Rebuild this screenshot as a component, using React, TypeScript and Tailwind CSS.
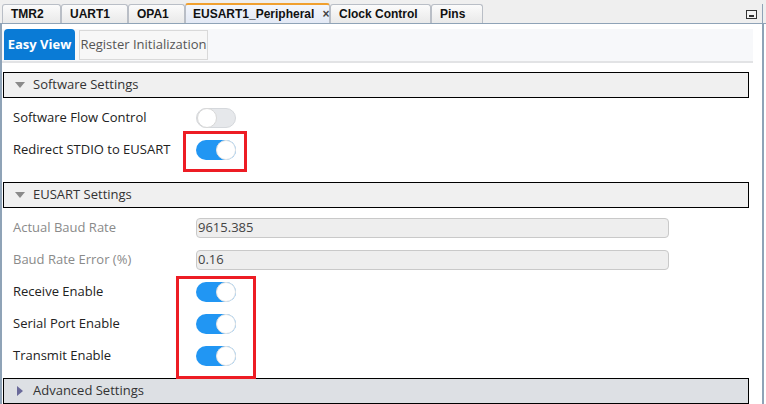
import React from "react";

const Toggle = ({ on }: { on: boolean }) => (
  <div
    className={
      on
        ? "relative w-[40px] h-[20px] rounded-full bg-[#2196f3]"
        : "relative w-[40px] h-[20px] rounded-full bg-[#e6e8eb] border border-[#d5d8dc]"
    }
  >
    <div
      className={
        on
          ? "absolute right-0 top-0 w-[20px] h-[20px] rounded-full bg-white border border-[#e3e3e3]"
          : "absolute left-0 top-[-1px] w-[20px] h-[20px] rounded-full bg-white border border-[#d8d8d8]"
      }
    />
  </div>
);

const Header = ({ title, open, dark }: { title: string; open: boolean; dark?: boolean }) => (
  <div
    className={
      "ml-[1px] w-[746px] h-[26px] border border-black flex items-center " +
      (dark ? "bg-[#dde0e4]" : "bg-[#f0f0f0]")
    }
  >
    <div className="w-[29px] flex justify-center pl-[2px]">
      {open ? (
        <svg width="10" height="6" viewBox="0 0 10 6">
          <path d="M0 0 L10 0 L5 6 Z" fill="#8a8a8a" />
        </svg>
      ) : (
        <svg width="6" height="10" viewBox="0 0 6 10">
          <path d="M0 0 L6 5 L0 10 Z" fill="#6a6a9a" />
        </svg>
      )}
    </div>
    <span className="text-[13px] text-[#333]">{title}</span>
  </div>
);

const Row = ({ label, children, muted }: { label: string; children: React.ReactNode; muted?: boolean }) => (
  <div className="h-[32px] flex items-center">
    <div className={"w-[194px] pl-[11px] text-[13px] " + (muted ? "text-[#8a8a8a]" : "text-[#222]")}>{label}</div>
    {children}
  </div>
);

const Field = ({ value }: { value: string }) => (
  <div className="w-[473px] h-[20px] rounded-[4px] bg-[#eeeeee] border border-[#c9c9c9] flex items-center text-[13px] text-[#444] pl-[1px]">
    {value}
  </div>
);

const tabFont = '"Liberation Sans", Arial, sans-serif';

export default function App() {
  const tabs = [
    { n: "TMR2", w: 59 },
    { n: "UART1", w: 67 },
    { n: "OPA1", w: 57 },
  ];
  return (
    <div
      className="relative w-[766px] h-[404px] bg-white overflow-hidden"
      style={{ fontFamily: '"Open Sans", "Noto Sans", sans-serif' }}
    >
      {/* Top tab strip */}
      <div className="h-[24px] bg-[#efefef] flex items-end pl-[2px] border-b border-[#8fa3b7] relative">
        {tabs.map((t) => (
          <div
            key={t.n}
            className="h-[19px] border border-b-0 border-[#b9bec6] rounded-t-[3px] bg-gradient-to-b from-[#fbfbfb] to-[#e9e9e9] flex items-center pl-[8px] text-[12px] font-bold text-[#111]"
            style={{ width: t.w, fontFamily: tabFont }}
          >
            {t.n}
          </div>
        ))}
        <div
          className="h-[20px] w-[145px] border border-b-0 border-[#b9bec6] border-t-2 border-t-[#f0a030] rounded-t-[3px] bg-gradient-to-b from-[#f3f6fc] to-[#e3e9f5] flex items-center pl-[7px] text-[12px] font-bold text-[#111]"
          style={{ fontFamily: tabFont }}
        >
          EUSART1_Peripheral
          <span className="ml-[8px] text-[12px] text-[#444]">×</span>
        </div>
        {[
          { n: "Clock Control", w: 101 },
          { n: "Pins", w: 52 },
        ].map((t) => (
          <div
            key={t.n}
            className="h-[19px] border border-b-0 border-[#b9bec6] rounded-t-[3px] bg-gradient-to-b from-[#fbfbfb] to-[#e9e9e9] flex items-center pl-[8px] text-[12px] font-bold text-[#111]"
            style={{ width: t.w, fontFamily: tabFont }}
          >
            {t.n}
          </div>
        ))}
        <div className="absolute right-[3px] top-[4px] h-[20px] w-[1px] bg-[#8fa3b7]" />
        <div className="absolute right-[9px] top-[10px] w-[11px] h-[9px] border border-[#333] bg-[#f4f4f4] flex items-end justify-center pb-[1px]">
          <div className="w-[5px] h-[2px] bg-[#333]" />
        </div>
      </div>

      {/* Body */}
      <div className="border-l-2 border-r-2 border-[#8fa3b7] mr-[2px] h-[380px]">
        <div className="pt-[5px]">
          <div className="w-[751px] h-[34px] bg-[#f7f8fa] border-b-2 border-[#e2e3e5] flex items-end pl-[2px] gap-[4px]">
            <div className="w-[71px] h-[31px] mb-[1px] bg-[#0a7bd6] rounded-t-[4px] flex items-center justify-center text-[13px] font-bold text-white">
              Easy View
            </div>
            <div className="w-[129px] h-[30px] mb-[1px] bg-[#f7f7f7] border border-[#d9d9d9] flex items-center justify-center text-[13px] text-[#555]">
              Register Initialization
            </div>
          </div>
        </div>

        <div className="mt-[9px]">
          <Header title="Software Settings" open />
          <div className="pt-[4px]">
            <Row label="Software Flow Control">
              <Toggle on={false} />
            </Row>
            <Row label="Redirect STDIO to EUSART">
              <Toggle on />
            </Row>
          </div>
        </div>

        <div className="mt-[16px]">
          <Header title="EUSART Settings" open />
          <div className="pt-[4px]">
            <Row label="Actual Baud Rate" muted>
              <Field value="9615.385" />
            </Row>
            <Row label="Baud Rate Error (%)" muted>
              <Field value="0.16" />
            </Row>
            <Row label="Receive Enable">
              <Toggle on />
            </Row>
            <Row label="Serial Port Enable">
              <Toggle on />
            </Row>
            <Row label="Transmit Enable">
              <Toggle on />
            </Row>
          </div>
        </div>

        <div className="mt-[6px]">
          <Header title="Advanced Settings" open={false} dark />
        </div>
      </div>

      {/* Red highlight boxes */}
      <div className="absolute left-[183px] top-[131px] w-[64px] h-[41px] border-[3px] border-[#ed1c24]" />
      <div className="absolute left-[176px] top-[276px] w-[80px] h-[103px] border-[3px] border-[#ed1c24]" />
    </div>
  );
}
